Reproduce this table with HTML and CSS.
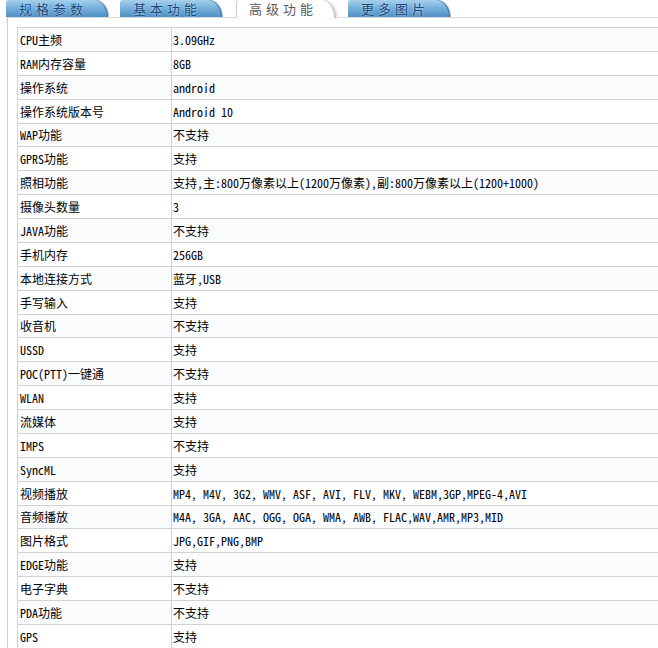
FILE: index.html
```html
<!DOCTYPE html>
<html lang="zh-CN">
<head>
<meta charset="utf-8">
<title>参数</title>
<link rel="stylesheet" href="styles.css">
</head>
<body>
<div class="page">
  <div class="tabs">
    <div class="tab">规格参数</div>
    <div class="tab">基本功能</div>
    <div class="tab active">高级功能</div>
    <div class="tab">更多图片</div>
  </div>
  <div class="panel">
    <table class="spec">
      <tr><td class="k">CPU主频</td><td class="v">3.09GHz</td></tr>
      <tr><td class="k">RAM内存容量</td><td class="v">8GB</td></tr>
      <tr><td class="k">操作系统</td><td class="v">android</td></tr>
      <tr><td class="k">操作系统版本号</td><td class="v">Android 10</td></tr>
      <tr><td class="k">WAP功能</td><td class="v">不支持</td></tr>
      <tr><td class="k">GPRS功能</td><td class="v">支持</td></tr>
      <tr><td class="k">照相功能</td><td class="v">支持,主:800万像素以上(1200万像素),副:800万像素以上(1200+1000)</td></tr>
      <tr><td class="k">摄像头数量</td><td class="v">3</td></tr>
      <tr><td class="k">JAVA功能</td><td class="v">不支持</td></tr>
      <tr><td class="k">手机内存</td><td class="v">256GB</td></tr>
      <tr><td class="k">本地连接方式</td><td class="v">蓝牙,USB</td></tr>
      <tr><td class="k">手写输入</td><td class="v">支持</td></tr>
      <tr><td class="k">收音机</td><td class="v">不支持</td></tr>
      <tr><td class="k">USSD</td><td class="v">支持</td></tr>
      <tr><td class="k">POC(PTT)一键通</td><td class="v">不支持</td></tr>
      <tr><td class="k">WLAN</td><td class="v">支持</td></tr>
      <tr><td class="k">流媒体</td><td class="v">支持</td></tr>
      <tr><td class="k">IMPS</td><td class="v">不支持</td></tr>
      <tr><td class="k">SyncML</td><td class="v">支持</td></tr>
      <tr><td class="k">视频播放</td><td class="v">MP4, M4V, 3G2, WMV, ASF, AVI, FLV, MKV, WEBM,3GP,MPEG-4,AVI</td></tr>
      <tr><td class="k">音频播放</td><td class="v">M4A, 3GA, AAC, OGG, OGA, WMA, AWB, FLAC,WAV,AMR,MP3,MID</td></tr>
      <tr><td class="k">图片格式</td><td class="v">JPG,GIF,PNG,BMP</td></tr>
      <tr><td class="k">EDGE功能</td><td class="v">支持</td></tr>
      <tr><td class="k">电子字典</td><td class="v">不支持</td></tr>
      <tr><td class="k">PDA功能</td><td class="v">不支持</td></tr>
      <tr><td class="k">GPS</td><td class="v">支持</td></tr>
    </table>
  </div>
</div>
</body>
</html>
```

FILE: styles.css
```css
html, body {
  margin: 0;
  padding: 0;
  background: #fff;
}
body {
  width: 658px;
  height: 648px;
  overflow: hidden;
  font-family: "Noto Sans Mono CJK SC", "Liberation Mono", "Noto Sans CJK SC", monospace;
  font-size: 12px;
  color: #000;
}
.page {
  width: 658px;
}
.tabs {
  display: flex;
  gap: 12px;
  height: 17px;
  margin-left: 6px;
  position: relative;
  z-index: 1;
}
.tab {
  width: 102px;
  height: 17px;
  box-sizing: border-box;
  padding: 1px 0 0 13px;
  font-family: "Noto Sans CJK SC", sans-serif;
  font-size: 13px;
  line-height: 15px;
  letter-spacing: 4px;
  color: #17457a;
  background: linear-gradient(to bottom, #a6d0ec 0%, #7cb4de 40%, #4f90c4 100%);
  border-top-right-radius: 16px 20px;
  border-top-left-radius: 3px;
  box-shadow: inset -1px 0 0 #4d7093, 1px 0 1px #aab8c2;
  text-shadow: 0 0 2px #d8ecf8;
}
.tab.active {
  background: #fff;
  color: #5a5a5a;
  text-shadow: none;
  border-left: 1px solid #ccc;
  border-right: 2px solid #c8c8c8;
  box-shadow: 2px 0 2px #e4e4e4;
  height: 18px;
  padding-left: 12px;
  margin-left: 2px;
  width: 100px;
}
.panel {
  border-left: 1px solid #cfcfcf;
  border-top: 1px solid #dcdcdc;
  margin-left: 7px;
  padding: 9px 0 0 9px;
}
.spec {
  border-collapse: collapse;
  width: 643px;
}
.spec tr {
  height: 23.88px;
}
.spec tr:nth-child(odd) {
  background: #fafbfd;
}
.spec td {
  border: 1px solid #d2d2d2;
  padding: 0;
  white-space: nowrap;
  vertical-align: middle;
}
.spec td.k {
  width: 151px;
  padding-left: 2px;
}
.spec td.v {
  padding-left: 1px;
}
```
